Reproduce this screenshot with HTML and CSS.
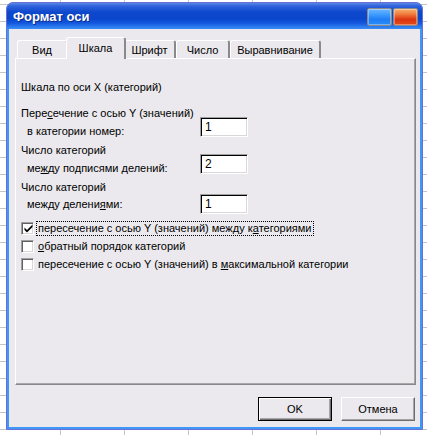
FILE: index.html
```html
<!DOCTYPE html>
<html lang="ru">
<head>
<meta charset="utf-8">
<title>Формат оси</title>
<link rel="stylesheet" href="styles.css">
</head>
<body>
<div class="window">
  <div class="titlebar">
    <span class="title">Формат оси</span>
    <div class="tbtns"><span class="tb help"></span><span class="tb close"></span></div>
  </div>
  <div class="client">
    <div class="tabs">
      <div class="tab t1">Вид</div>
      <div class="tab t2 active">Шкала</div>
      <div class="tab t3">Шрифт</div>
      <div class="tab t4">Число</div>
      <div class="tab t5">Выравнивание</div>
    </div>
    <div class="panel">
      <div class="heading">Шкала по оси X (категорий)</div>
      <div class="fields">
        <div class="field">
          <div class="labels">
            <div class="line">Пере<u>с</u>ечение с осью Y (значений)</div>
            <div class="line indent">в категории номер:</div>
          </div>
          <div class="input">1</div>
        </div>
        <div class="field">
          <div class="labels">
            <div class="line">Число категорий</div>
            <div class="line indent">ме<u>ж</u>ду подписями делений:</div>
          </div>
          <div class="input">2</div>
        </div>
        <div class="field last">
          <div class="labels">
            <div class="line">Число категорий</div>
            <div class="line indent">между делени<u>я</u>ми:</div>
          </div>
          <div class="input">1</div>
        </div>
      </div>
      <div class="checks">
        <div class="check"><span class="box checked"><svg width="9" height="9" viewBox="0 0 9 9"><path d="M0.5 3.5 L3 6 L8.5 0.5 L8.5 3 L3 8.5 L0.5 6 Z" fill="#000"/></svg></span><span class="clabel focus">пересечение с осью Y (значений) между к<u>а</u>тегориями</span></div>
        <div class="check"><span class="box"></span><span class="clabel"><u>о</u>братный порядок категорий</span></div>
        <div class="check"><span class="box"></span><span class="clabel">пересечение с осью Y (значений) в <u>м</u>аксимальной категории</span></div>
      </div>
    </div>
    <div class="buttons">
      <div class="btn default">OK</div>
      <div class="btn">Отмена</div>
    </div>
  </div>
</div>
</body>
</html>
```
FILE: styles.css
```css
html, body {
  margin: 0;
  padding: 0;
}
body {
  width: 427px;
  height: 435px;
  overflow: hidden;
  background-color: #fff;
  background-image:
    repeating-linear-gradient(to bottom, transparent 0, transparent 4px, #c4c4c4 4px, #c4c4c4 5px, transparent 5px, transparent 17px),
    repeating-linear-gradient(to right, transparent 0, transparent 60px, #c4c4c4 60px, #c4c4c4 61px, transparent 61px, transparent 64px);
  font-family: "Liberation Sans", Arial, sans-serif;
  font-size: 11px;
  color: #000;
}
.window {
  box-sizing: border-box;
  width: 417px;
  height: 428px;
  margin: 2px 0 0 6px;
  border: 1px solid #6670d6;
  border-radius: 7px 7px 0 0;
  background: #3d98f6;
  padding: 0 2px 2px;
  display: flex;
  flex-direction: column;
}
.titlebar {
  height: 26px;
  margin: 0 -2px;
  border-radius: 6px 6px 0 0;
  background: linear-gradient(to bottom, #5a86e6 0%, #2f62dc 12%, #0e48cc 35%, #0a46cc 60%, #1459de 78%, #2d7cf0 92%, #3a8ef6 100%);
  display: flex;
  align-items: center;
  padding: 0 4px 0 6px;
}
.title {
  flex: 1;
  color: #fff;
  font-weight: bold;
  font-size: 13px;
  text-shadow: 1px 1px 0 #0b2a8a;
  padding-top: 1px;
}
.tbtns {
  display: flex;
  gap: 1px;
  margin-top: 2px;
}
.tb {
  display: block;
  box-sizing: border-box;
  width: 25px;
  height: 18px;
  border: 1px solid #8c8a88;
  border-radius: 2px;
  box-shadow: inset 0 0 0 1px rgba(255,255,255,0.35);
}
.tb.help {
  background: linear-gradient(to bottom, #6fb6ff 0%, #3e9cff 35%, #1f7ef4 65%, #2a8cf8 100%);
}
.tb.close {
  background: linear-gradient(to bottom, #f7b070 0%, #f08040 30%, #dc3410 65%, #e24c1c 100%);
}
.client {
  flex: 1;
  background: #ebe9ed;
  padding: 8px 0 0 6px;
  display: flex;
  flex-direction: column;
}
.tabs {
  display: flex;
  align-items: flex-end;
  height: 21px;
  padding-left: 2px;
  position: relative;
  z-index: 1;
}
.tab {
  box-sizing: border-box;
  height: 18px;
  border-top: 1px solid #fff;
  border-left: 1px solid #fff;
  border-right: 2px solid #8a8a8a;
  border-radius: 3px 3px 0 0;
  display: flex;
  align-items: center;
  justify-content: center;
  background: #ebe9ed;
}
.t1 { width: 51px; }
.t2 { width: 56px; }
.t3 { width: 52px; }
.t4 { width: 54px; }
.t5 { width: 91px; }
.tab.active {
  width: 60px;
  height: 22px;
  margin: 0 -2px -1px -2px;
  padding-bottom: 2px;
  position: relative;
  z-index: 2;
}
.panel {
  box-sizing: border-box;
  width: 401px;
  height: 327px;
  border-top: 1px solid #fff;
  border-left: 1px solid #fff;
  border-right: 1px solid #888;
  border-bottom: 1px solid #888;
  box-shadow: inset -1px -1px 0 #a8a8a8;
  padding: 19px 0 0 5px;
}
.heading {
  height: 18px;
  line-height: 18px;
}
.fields {
  margin-top: 8px;
  display: flex;
  flex-direction: column;
  gap: 1px;
}
.field {
  display: flex;
  align-items: flex-end;
}
.labels {
  width: 179px;
}
.line {
  height: 18px;
  line-height: 18px;
  white-space: nowrap;
}
.field.last .line + .line {
  height: 17px;
  line-height: 17px;
}
.field.last .input {
  margin-bottom: -1px;
}
.indent {
  padding-left: 6px;
}
.input {
  box-sizing: border-box;
  width: 48px;
  height: 20px;
  margin-bottom: 3px;
  background: #fff;
  border: 1px solid;
  border-color: #a0a0a0 #fff #fff #a0a0a0;
  box-shadow: inset 1px 1px 0 #000, inset -1px -1px 0 #d8d8d8;
  padding: 2px 0 0 4px;
  font-size: 12px;
  line-height: 15px;
}
.checks {
  margin-top: 6px;
  display: flex;
  flex-direction: column;
}
.check {
  height: 18px;
  display: flex;
  align-items: center;
}
.box {
  box-sizing: border-box;
  width: 13px;
  height: 13px;
  background: #fff;
  border: 1px solid;
  border-color: #a0a0a0 #fff #fff #a0a0a0;
  box-shadow: inset 1px 1px 0 #606060, inset -1px -1px 0 #d8d8d8;
  margin-right: 2px;
  display: flex;
  align-items: center;
  justify-content: center;
}
.box svg {
  display: block;
  margin: 1px 0 0 1px;
}
.clabel {
  border: 1px dotted transparent;
  padding: 0 1px;
  line-height: 13px;
  white-space: nowrap;
}
.clabel.focus {
  border-color: #000;
}
.buttons {
  display: flex;
  justify-content: flex-end;
  gap: 9px;
  padding: 12px 5px 0 0;
}
.btn {
  box-sizing: border-box;
  width: 74px;
  height: 24px;
  background: #ebe9ed;
  border: 1px solid;
  border-color: #fff #6e6e6e #6e6e6e #fff;
  box-shadow: inset -1px -1px 0 #a6a6a6;
  display: flex;
  align-items: center;
  justify-content: center;
}
.btn.default {
  border: 1px solid #000;
  box-shadow: inset 1px 1px 0 #fff, inset -1px -1px 0 #6e6e6e, inset -2px -2px 0 #a6a6a6;
}
```
